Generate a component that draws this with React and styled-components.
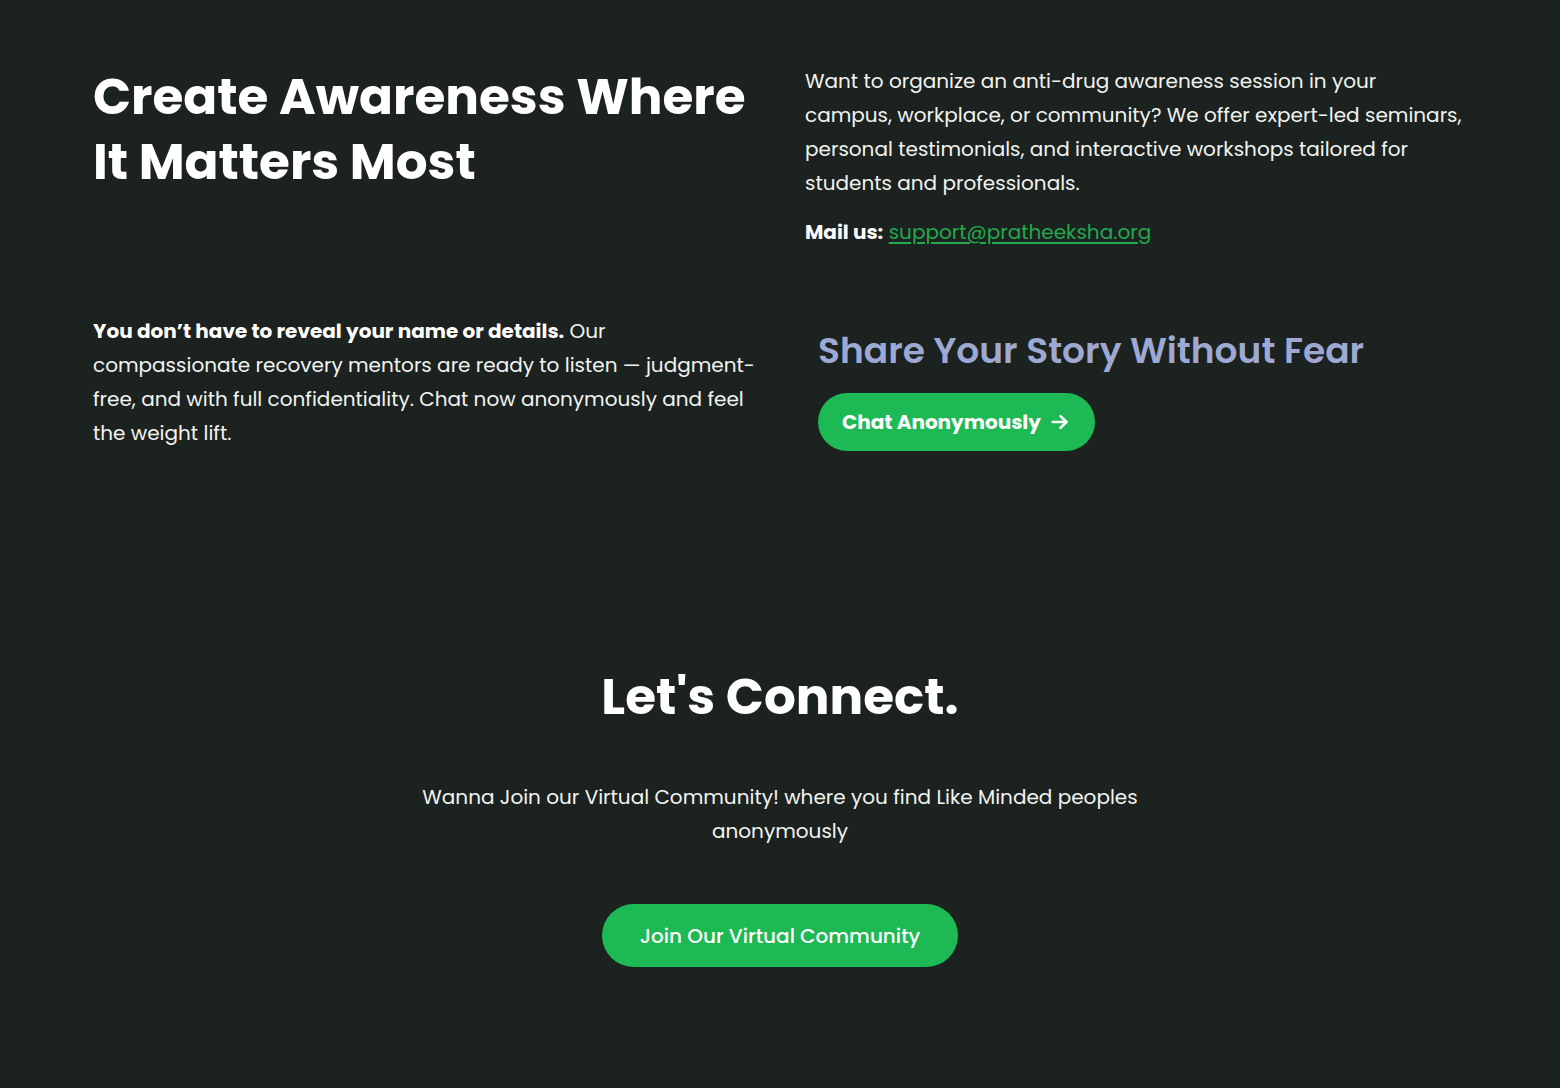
import styled, { createGlobalStyle } from "styled-components";

const GlobalStyle = createGlobalStyle`
  * { box-sizing: border-box; }
  body {
    margin: 0;
    background: #1b221f;
    font-family: "Poppins", "Open Sans", "Liberation Sans", sans-serif;
    color: #f4f6f4;
  }
`;

const Page = styled.main`
  min-height: 1088px;
  background: #1b221f;
`;

const Section = styled.section`
  padding: 64px 93px 0;
  display: grid;
  grid-template-columns: 1fr 1fr;
  column-gap: 50px;
  row-gap: 65px;
`;

const Heading = styled.h2`
  margin: 0;
  font-size: 50px;
  line-height: 65px;
  font-weight: 700;
  color: #ffffff;
`;

const Text = styled.p`
  margin: 0;
  font-size: 20px;
  line-height: 34px;
  font-weight: 400;
  color: #f2f4f2;
  text-align: ${({ $center }) => ($center ? "center" : "left")};

  strong { font-weight: 700; color: #ffffff; }
`;

const MailLine = styled(Text)`
  margin-top: 15px;
`;

const MailLink = styled.a`
  color: #23a84e;
  text-decoration: underline;
  text-underline-offset: 3px;
`;

const StoryBox = styled.div`
  padding: 14px 0 0 13px;
`;

const StoryTitle = styled.h3`
  margin: 0 0 20px;
  font-size: 36px;
  line-height: 45px;
  font-weight: 600;
  color: #9da9d3;
`;

const PillButton = styled.a`
  display: inline-flex;
  align-items: center;
  gap: ${({ $icon }) => ($icon ? "8px" : "0")};
  height: ${({ $tall }) => ($tall ? "63px" : "58px")};
  padding: 0 ${({ $tall }) => ($tall ? "38px" : "24px")};
  border-radius: 999px;
  background: #1db954;
  color: #ffffff;
  font-size: 20px;
  font-weight: ${({ $tall }) => ($tall ? 500 : 700)};
  text-decoration: none;
  cursor: pointer;
`;

const Connect = styled.section`
  margin-top: 217px;
  display: flex;
  flex-direction: column;
  align-items: center;
`;

const ConnectTitle = styled.h2`
  margin: 0 0 54px;
  font-size: 50px;
  line-height: 58px;
  font-weight: 700;
  color: #ffffff;
`;

const ConnectText = styled(Text)`
  max-width: 730px;
  margin-bottom: 56px;
`;

const Arrow = () => (
  <svg width="22" height="22" viewBox="0 0 24 24" fill="none" stroke="currentColor" strokeWidth="2.8" strokeLinecap="round" strokeLinejoin="round">
    <path d="M4 12h15" />
    <path d="M12.5 5.5L19 12l-6.5 6.5" />
  </svg>
);

export default function App() {
  return (
    <Page>
      <GlobalStyle />
      <Section>
        <Heading>Create Awareness Where It Matters Most</Heading>
        <div>
          <Text>
            Want to organize an anti-drug awareness session in your campus, workplace, or community? We offer
            expert-led seminars, personal testimonials, and interactive workshops tailored for students and
            professionals.
          </Text>
          <MailLine>
            <strong>Mail us:</strong> <MailLink href="mailto:support@pratheeksha.org">support@pratheeksha.org</MailLink>
          </MailLine>
        </div>
        <Text>
          <strong>You don’t have to reveal your name or details.</strong> Our compassionate recovery mentors are
          ready to listen — judgment-free, and with full confidentiality. Chat now anonymously and feel the weight
          lift.
        </Text>
        <StoryBox>
          <StoryTitle>Share Your Story Without Fear</StoryTitle>
          <PillButton $icon>
            Chat Anonymously <Arrow />
          </PillButton>
        </StoryBox>
      </Section>
      <Connect>
        <ConnectTitle>Let's Connect.</ConnectTitle>
        <ConnectText $center>
          Wanna Join our Virtual Community! where you find Like Minded peoples anonymously
        </ConnectText>
        <PillButton $tall>Join Our Virtual Community</PillButton>
      </Connect>
    </Page>
  );
}
